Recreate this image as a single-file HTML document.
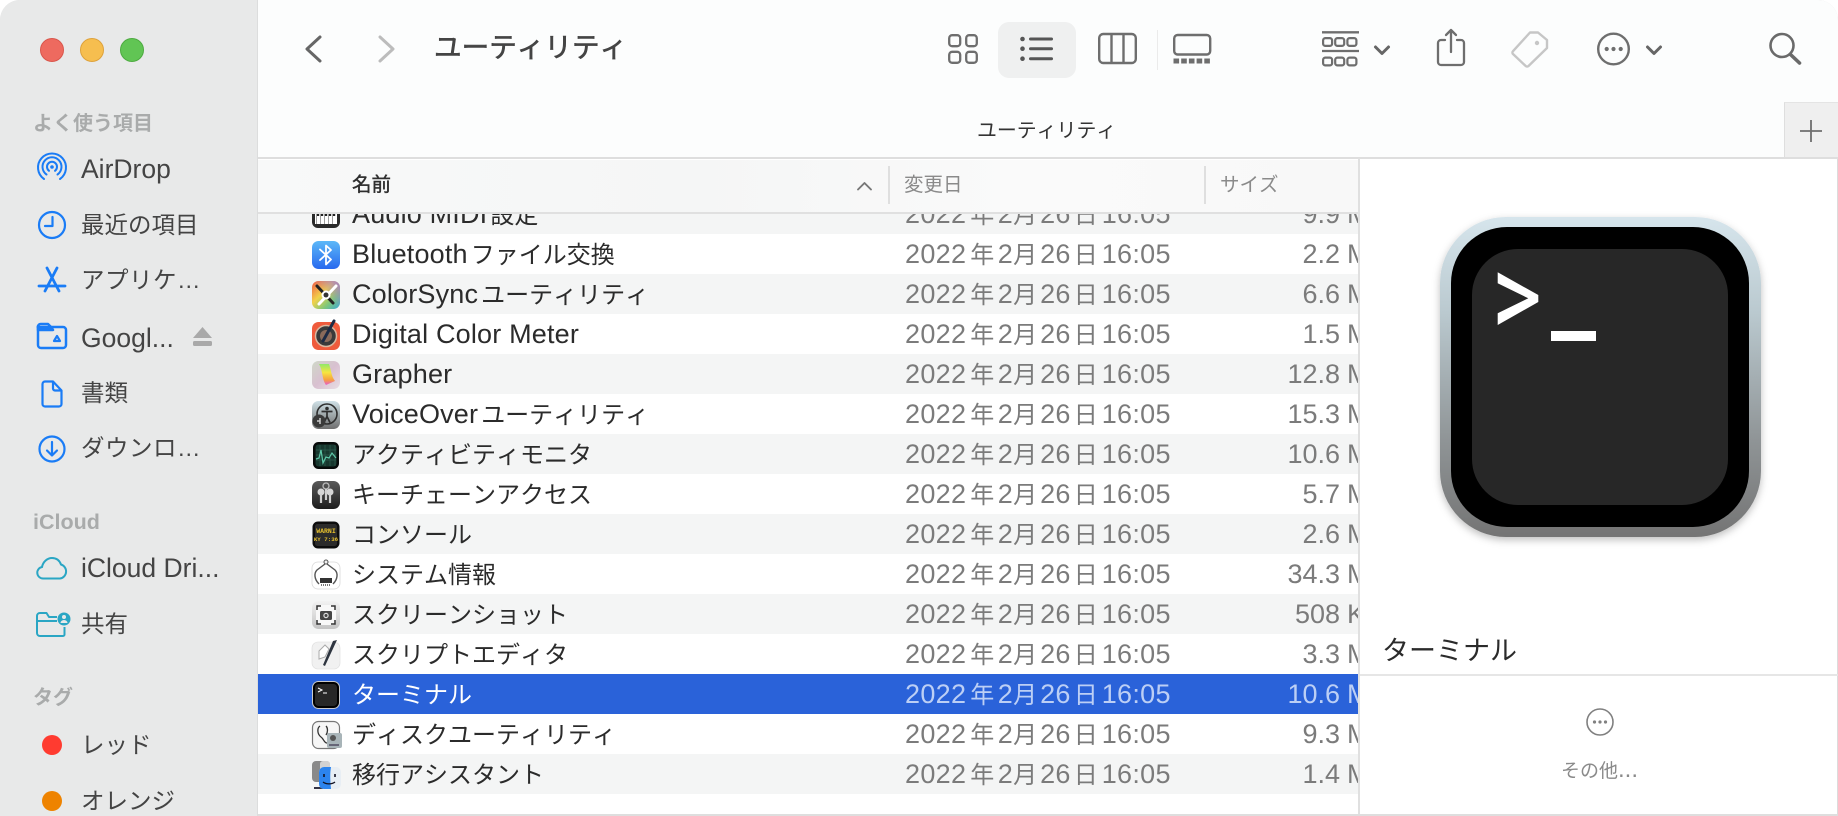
<!DOCTYPE html>
<html lang="ja"><head><meta charset="utf-8"><title>ユーティリティ</title>
<style>
*{box-sizing:border-box}
html,body{margin:0;padding:0;background:#fff}
body{width:1838px;height:816px;position:relative;overflow:hidden;font-family:"Liberation Sans","Noto Sans CJK JP",sans-serif;color:#2b2b2b}
.a{position:absolute}
svg{position:absolute;overflow:visible;display:block}
#win{position:absolute;inset:0;background:#fff;border-top-left-radius:20px;border-top-right-radius:20px;overflow:hidden;box-shadow:inset 0 0 0 1px #dcdcdc}
#side{position:absolute;left:0;top:0;width:258px;height:816px;background:#e8e9e9;border-right:1px solid #dcdddd}
#tb{position:absolute;left:258px;top:0;right:0;height:159px;background:#fcfdfd;border-bottom:2px solid #dedede}
.h{position:absolute;left:33px;font-size:20px;font-weight:700;color:#a9abab;line-height:24px;white-space:nowrap;font-kerning:none}
.s{position:absolute;left:81px;font-size:23.5px;color:#444;line-height:32px;white-space:nowrap;font-kerning:none}
.s.l{font-size:26.5px}
.s.e{letter-spacing:.5px}
.col{position:absolute;top:172px;line-height:26px;font-size:19.5px;color:#8a8a8a;white-space:nowrap;font-kerning:none}
#list{position:absolute;left:258px;top:213px;width:1100px;height:601px;overflow:hidden;background:#fff}
.r{position:absolute;left:0;width:1100px;height:40px;line-height:40px;font-size:27px;color:#2b2b2b;white-space:nowrap}
.r.z{background:#f4f5f5}
.r.sel{background:#2a62d9;color:#fff}
.r i{font-style:normal;font-size:24px;line-height:1;font-kerning:none;letter-spacing:0}
.n{position:absolute;left:94px;top:0;letter-spacing:.18px}
.g{margin-left:3px}
.d{position:absolute;left:647px;top:0;color:#7b7b7b;letter-spacing:.3px}
.d i:nth-of-type(1){margin:0 3.5px 0 4px}
.d i:nth-of-type(2){margin:0 3px 0 0}
.d i:nth-of-type(3){margin:0 4px 0 3px}
.z1{position:absolute;right:18px;top:0;color:#7b7b7b}
.u{position:absolute;left:1089px;top:0;color:#7b7b7b}
.sel .d,.sel .z1,.sel .u{color:#bccff5}
.ic{left:51px;top:4px;width:32px;height:32px}
</style></head><body>
<div id="win">
<div id="side"></div>
<div id="tb"></div>

<!-- traffic lights -->
<div class="a" style="left:40px;top:38px;width:24px;height:24px;border-radius:50%;background:#ee6a5f;border:1px solid #d9564c"></div>
<div class="a" style="left:80px;top:38px;width:24px;height:24px;border-radius:50%;background:#f6be4f;border:1px solid #dea23b"></div>
<div class="a" style="left:120px;top:38px;width:24px;height:24px;border-radius:50%;background:#61c554;border:1px solid #4dab40"></div>

<!-- sidebar -->
<div class="h" style="top:112px">よく使う項目</div>
<svg style="left:36px;top:152px" width="32" height="32" viewBox="0 0 32 32" fill="none" stroke="#1a7cf6" stroke-width="2" stroke-linecap="round"><path d="M8 27A14 14 0 1 1 24 27"/><path d="M10.500 22.500A9.500 9.500 0 1 1 21.500 22.500"/><path d="M13 18.800A5 5 0 1 1 19 18.800"/><circle cx="16" cy="15" r="1.800" fill="#1a7cf6" stroke="none"/></svg>
<div class="s l" style="top:153px">AirDrop</div>
<svg style="left:36px;top:209px" width="32" height="32" viewBox="0 0 32 32" fill="none" stroke="#1a7cf6" stroke-width="2.200" stroke-linecap="round" stroke-linejoin="round"><circle cx="16" cy="16" r="13"/><path d="M16.500 8v9H9"/></svg>
<div class="s" style="top:209px">最近の項目</div>
<svg style="left:36px;top:264px" width="32" height="32" viewBox="0 0 32 32" fill="none" stroke="#1a7cf6" stroke-width="2.800" stroke-linecap="round"><path d="M11 4l12 23"/><path d="M21 4L9 27"/><path d="M3 22h26"/></svg>
<div class="s e" style="top:264px">アプリケ…</div>
<svg style="left:36px;top:322px" width="32" height="28" viewBox="0 0 32 28" fill="none" stroke="#1a7cf6" stroke-width="2.500" stroke-linejoin="round"><path d="M2 6a3 3 0 0 1 3-4h7l3 3h12a3 3 0 0 1 3 3v15a3 3 0 0 1-3 3H5a3 3 0 0 1-3-3z"/><path d="M2 5h13l2 3H2z" fill="#1a7cf6"/><path d="M21 14l3 5h-6z" stroke-width="2.200"/></svg>
<div class="s l" style="top:322px">Googl...</div>
<svg style="left:193px;top:327px" width="19" height="19" viewBox="0 0 19 19" fill="#a9a9a9"><path d="M9.500 0L19 11H0z"/><rect y="14" width="19" height="5" rx="1.500"/></svg>
<svg style="left:41px;top:380px" width="22" height="28" viewBox="0 0 22 28" fill="none" stroke="#1a7cf6" stroke-width="2.200" stroke-linejoin="round"><path d="M4 1.500h8l8.500 9V24a2.500 2.500 0 0 1-2.500 2.500H4A2.500 2.500 0 0 1 1.500 24V4A2.500 2.500 0 0 1 4 1.500z"/><path d="M12 1.500v7a2 2 0 0 0 2 2h6.500"/></svg>
<div class="s" style="top:377px">書類</div>
<svg style="left:36px;top:433px" width="32" height="32" viewBox="0 0 32 32" fill="none" stroke="#1a7cf6" stroke-width="2.200" stroke-linecap="round" stroke-linejoin="round"><circle cx="16" cy="16" r="12.500"/><path d="M16 9v13M11 17.500l5 5 5-5"/></svg>
<div class="s e" style="top:432px">ダウンロ…</div>

<div class="h" style="top:510px;font-size:21.5px">iCloud</div>
<svg style="left:36px;top:556px" width="32" height="24" viewBox="0 0 32 24" fill="none" stroke="#2aa6c4" stroke-width="2"><path d="M7 22.500a5.800 5.800 0 0 1-1-11.500c1-5 5-9 10-9 4.500 0 7.500 2.500 9 6.500a7.200 7.200 0 0 1-1 14z"/></svg>
<div class="s l" style="top:552px">iCloud Dri...</div>
<svg style="left:36px;top:611px" width="34" height="26" viewBox="0 0 34 26" fill="none" stroke="#2aa6c4" stroke-width="2" stroke-linejoin="round"><path d="M21 6H13L10.500 2H4a3 3 0 0 0-3 3v17a3 3 0 0 0 3 3h23a1.500 1.500 0 0 0 1.500-1.500V16"/><path d="M1 10h20"/><circle cx="28" cy="8" r="6.500" fill="#2aa6c4" stroke="none"/><circle cx="28" cy="6" r="2" fill="#e8e9e9" stroke="none"/><path d="M24.500 12a3.500 3 0 0 1 7 0z" fill="#e8e9e9" stroke="none"/></svg>
<div class="s" style="top:608px">共有</div>

<div class="h" style="top:686px">タグ</div>
<div class="a" style="left:42px;top:735px;width:20px;height:20px;border-radius:50%;background:#ff3b30"></div>
<div class="s" style="top:729px">レッド</div>
<div class="a" style="left:42px;top:791px;width:20px;height:20px;border-radius:50%;background:#ee8300"></div>
<div class="s" style="top:785px">オレンジ</div>

<!-- toolbar -->
<svg style="left:305px;top:35px" width="17" height="28" viewBox="0 0 17 28" fill="none" stroke="#666" stroke-width="3" stroke-linecap="round" stroke-linejoin="round"><path d="M15 2L2 14l13 12"/></svg>
<svg style="left:378px;top:35px" width="17" height="28" viewBox="0 0 17 28" fill="none" stroke="#bcbcbc" stroke-width="3" stroke-linecap="round" stroke-linejoin="round"><path d="M2 2l13 12L2 26"/></svg>
<div class="a" style="left:434px;top:29px;font-size:27.6px;line-height:38px;color:#444;-webkit-text-stroke:.6px #444;white-space:nowrap;font-kerning:none">ユーティリティ</div>

<div class="a" style="left:998px;top:22px;width:78px;height:56px;border-radius:11px;background:#eff0f0"></div>
<svg style="left:947px;top:33px" width="32" height="31" viewBox="0 0 32 31" fill="none" stroke="#6e6e6e" stroke-width="2.300"><rect x="2.200" y="2.200" width="11" height="11" rx="3"/><rect x="19.200" y="2.200" width="10.600" height="11" rx="3"/><rect x="2.200" y="18.800" width="11" height="11" rx="3"/><rect x="19.200" y="18.800" width="10.600" height="11" rx="3"/></svg>
<svg style="left:1019px;top:35px" width="36" height="28" viewBox="0 0 36 28" fill="#555"><circle cx="3.500" cy="4" r="2.300"/><circle cx="3.500" cy="13.700" r="2.300"/><circle cx="3.500" cy="23.700" r="2.300"/><rect x="10" y="2.500" width="24" height="3" rx="1.500"/><rect x="10" y="12.200" width="24" height="3" rx="1.500"/><rect x="10" y="22.200" width="24" height="3" rx="1.500"/></svg>
<svg style="left:1098px;top:32px" width="39" height="33" viewBox="0 0 39 33" fill="none" stroke="#6e6e6e" stroke-width="2.400"><rect x="1.200" y="2" width="36.600" height="29" rx="4"/><path d="M13.500 2v29M25.500 2v29"/></svg>
<div class="a" style="left:1157px;top:30px;width:1px;height:40px;background:#ebebeb"></div>
<svg style="left:1172px;top:33px" width="40" height="31" viewBox="0 0 40 31" fill="none" stroke="#6e6e6e" stroke-width="2.400"><rect x="2.200" y="2" width="36" height="19.500" rx="3.500"/><path d="M1.500 28H38" stroke-width="5" stroke-dasharray="5.600 2.100"/></svg>

<svg style="left:1321px;top:30px" width="39" height="37" viewBox="0 0 39 37" fill="none" stroke="#6e6e6e" stroke-width="2.200"><path d="M1 2.300h37M1 21h37" stroke-width="2.300"/><rect x="2.100" y="8.100" width="9" height="7.800" rx="2.200"/><rect x="14.200" y="8.100" width="9" height="7.800" rx="2.200"/><rect x="26.400" y="8.100" width="9" height="7.800" rx="2.200"/><rect x="2.100" y="27.600" width="9" height="7.800" rx="2.200"/><rect x="14.200" y="27.600" width="9" height="7.800" rx="2.200"/><rect x="26.400" y="27.600" width="9" height="7.800" rx="2.200"/></svg>
<svg style="left:1373px;top:45px" width="18" height="11" viewBox="0 0 18 11" fill="none" stroke="#666" stroke-width="3" stroke-linecap="round" stroke-linejoin="round"><path d="M2.500 2l6.500 6.500 6.500-6.500"/></svg>
<svg style="left:1434px;top:28px" width="32" height="39" viewBox="0 0 32 39" fill="none" stroke="#6e6e6e" stroke-width="2.300" stroke-linecap="round" stroke-linejoin="round"><path d="M11 12H7a3 3 0 0 0-3 3v19a3 3 0 0 0 3 3h20a3 3 0 0 0 3-3V15a3 3 0 0 0-3-3h-4"/><path d="M17 24V2M12 7l5-5 5 5"/></svg>
<svg style="left:1509px;top:30px" width="41" height="39" viewBox="0 0 41 39" fill="none" stroke="#c6c6c6" stroke-width="2.400" stroke-linejoin="round"><path d="M21 2.500H29L38 10V18L19.500 36a2 2 0 0 1-2.800 0L4 24a2 2 0 0 1 0-2.800z"/><circle cx="28" cy="13" r="2.200" fill="#c6c6c6" stroke="none"/></svg>
<svg style="left:1596px;top:31px" width="36" height="36" viewBox="0 0 36 36"><circle cx="17.500" cy="18" r="15.300" fill="none" stroke="#6e6e6e" stroke-width="2.400"/><circle cx="10.700" cy="18" r="2.100" fill="#6e6e6e"/><circle cx="17.500" cy="18" r="2.100" fill="#6e6e6e"/><circle cx="24.700" cy="18" r="2.100" fill="#6e6e6e"/></svg>
<svg style="left:1645px;top:45px" width="18" height="11" viewBox="0 0 18 11" fill="none" stroke="#666" stroke-width="3" stroke-linecap="round" stroke-linejoin="round"><path d="M2.500 2l6.500 6.500 6.500-6.500"/></svg>
<svg style="left:1768px;top:31px" width="35" height="34" viewBox="0 0 35 34" fill="none" stroke="#6a6a6a" stroke-width="2.600" stroke-linecap="round"><circle cx="14" cy="14.500" r="11.500"/><path d="M22.500 23.500l9 8.500" stroke-width="3.600"/></svg>

<!-- tab bar -->
<div class="a" style="left:977px;top:118px;font-size:19.9px;line-height:26px;color:#333;white-space:nowrap;font-kerning:none">ユーティリティ</div>
<div class="a" style="left:1784px;top:102px;width:54px;height:57px;background:#efefef;border-left:1px solid #dedede;border-top:1px solid #e4e4e4;border-bottom:2px solid #dedede"></div>
<svg style="left:1800px;top:120px" width="22" height="22" viewBox="0 0 22 22" stroke="#6e6e6e" stroke-width="1.800"><path d="M11 0v22M0 11h22"/></svg>

<!-- list -->
<div id="list">
<div class="r z" style="top:-19px"><svg class="ic" viewBox="0 0 32 32"><rect x="3" y="3" width="28" height="27" rx="6" fill="#2a2a2a"/><rect x="6" y="7" width="22" height="19" fill="#fff"/><path d="M9 7v11M13 7v11M17 7v11M21 7v11M25 7v11" stroke="#222" stroke-width="2.400"/><path d="M7.500 7v19M11.500 7v19M15.500 7v19M19.500 7v19M23.500 7v19" stroke="#888" stroke-width=".8"/></svg><span class="n">Audio MIDI<i class="g">設定</i></span><span class="d">2022<i>年</i>2<i>月</i>26<i>日</i>16:05</span><span class="z1">9.9</span><span class="u">M</span></div>

<div class="r" style="top:21px"><svg class="ic" viewBox="0 0 32 32"><defs><linearGradient id="g1" x1="0" y1="0" x2="0" y2="1"><stop offset="0" stop-color="#5cb8f8"/><stop offset="1" stop-color="#2869ee"/></linearGradient></defs><rect x="3" y="3" width="28" height="28" rx="6.500" fill="url(#g1)"/><path d="M11 11.500l11 10-5 5V7.500l5 4.500-11 10" fill="none" stroke="#fff" stroke-width="1.800" stroke-linejoin="round" stroke-linecap="round"/></svg><span class="n">Bluetooth<i class="g">ファイル交換</i></span><span class="d">2022<i>年</i>2<i>月</i>26<i>日</i>16:05</span><span class="z1">2.2</span><span class="u">M</span></div>

<div class="r z" style="top:61px"><svg class="ic" viewBox="0 0 32 32"><defs><linearGradient id="g2" x1="0" y1="0" x2="1" y2="1"><stop offset="0" stop-color="#f05a48"/><stop offset=".4" stop-color="#f2d14a"/><stop offset=".7" stop-color="#7fc87a"/><stop offset="1" stop-color="#3aa7d8"/></linearGradient><linearGradient id="g2b" x1="1" y1="0" x2="0" y2="1"><stop offset="0" stop-color="#a67cc8"/><stop offset=".5" stop-color="#a67cc8" stop-opacity="0"/></linearGradient></defs><rect x="3" y="3" width="28" height="28" rx="6.500" fill="url(#g2)"/><rect x="3" y="3" width="28" height="28" rx="6.500" fill="url(#g2b)"/><path d="M8 8l16 17" stroke="#222" stroke-width="3" stroke-linecap="round"/><path d="M27 8l-17 18" stroke="#fff" stroke-width="3" stroke-linecap="round"/><circle cx="17" cy="17" r="4.500" fill="#fff"/><circle cx="17" cy="17" r="2.500" fill="#333"/></svg><span class="n">ColorSync<i class="g">ユーティリティ</i></span><span class="d">2022<i>年</i>2<i>月</i>26<i>日</i>16:05</span><span class="z1">6.6</span><span class="u">M</span></div>

<div class="r" style="top:101px"><svg class="ic" viewBox="0 0 32 32"><rect x="3" y="4" width="28" height="28" rx="6.500" fill="#ef5b3c"/><circle cx="17" cy="18" r="10.500" fill="#3a3a3a" stroke="#d8b8a0" stroke-width="1.500"/><circle cx="17" cy="18" r="6" fill="#8a6a5a"/><path d="M14 23L25 3" stroke="#1c2a44" stroke-width="3" stroke-linecap="round"/></svg><span class="n">Digital Color Meter</span><span class="d">2022<i>年</i>2<i>月</i>26<i>日</i>16:05</span><span class="z1">1.5</span><span class="u">M</span></div>

<div class="r z" style="top:141px"><svg class="ic" viewBox="0 0 32 32"><defs><linearGradient id="g3" x1="0" y1="0" x2="1" y2="1"><stop offset="0" stop-color="#cfd8c8"/><stop offset=".5" stop-color="#d8c0d0"/><stop offset="1" stop-color="#e8dde4"/></linearGradient><linearGradient id="g3b" x1="0" y1="0" x2="0" y2="1"><stop offset="0" stop-color="#8fe86a"/><stop offset=".4" stop-color="#f6e640"/><stop offset=".75" stop-color="#f6a040"/><stop offset="1" stop-color="#e85ad0"/></linearGradient></defs><rect x="3" y="3" width="28" height="28" rx="6.500" fill="url(#g3)"/><path d="M10 6h10c2 5 2 12 6 17l-9 4c-4-5-3-14-7-21z" fill="url(#g3b)"/></svg><span class="n">Grapher</span><span class="d">2022<i>年</i>2<i>月</i>26<i>日</i>16:05</span><span class="z1">12.8</span><span class="u">M</span></div>

<div class="r" style="top:181px"><svg class="ic" viewBox="0 0 32 32"><defs><linearGradient id="g4" x1="0" y1="0" x2="0" y2="1"><stop offset="0" stop-color="#cfe0e6"/><stop offset="1" stop-color="#6f6f6f"/></linearGradient></defs><rect x="3" y="3" width="28" height="28" rx="6.500" fill="url(#g4)"/><circle cx="18" cy="16" r="10" fill="none" stroke="#2e2e2e" stroke-width="1.600"/><circle cx="18" cy="10.500" r="1.800" fill="#2e2e2e"/><path d="M12.500 13.500h11M18 13.500v5l-3 6M18 18.500l3 6" fill="none" stroke="#2e2e2e" stroke-width="1.700"/><circle cx="10" cy="23" r="6.500" fill="#3a3a3a"/><path d="M8 23h3M11 20v6" stroke="#ccc" stroke-width="1.500"/></svg><span class="n">VoiceOver<i class="g">ユーティリティ</i></span><span class="d">2022<i>年</i>2<i>月</i>26<i>日</i>16:05</span><span class="z1">15.3</span><span class="u">M</span></div>

<div class="r z" style="top:221px"><svg class="ic" viewBox="0 0 32 32"><rect x="4" y="4" width="26" height="27" rx="5.500" fill="#070b0a"/><rect x="6.500" y="6.500" width="21" height="22" rx="3" fill="#17382f"/><path d="M7 12h20M7 17h20M7 22h20M11 7v21M16 7v21M21 7v21M26 7v21" stroke="#2f5e50" stroke-width=".7"/><path d="M7 21l3-1 2-8 2 13 3-6 3 1 3-5 4 5" fill="none" stroke="#5ec8a8" stroke-width="1.200"/></svg><span class="n"><i>アクティビティモニタ</i></span><span class="d">2022<i>年</i>2<i>月</i>26<i>日</i>16:05</span><span class="z1">10.6</span><span class="u">M</span></div>

<div class="r" style="top:261px"><svg class="ic" viewBox="0 0 32 32"><defs><linearGradient id="g5" x1="0" y1="0" x2="0" y2="1"><stop offset="0" stop-color="#5a5a5a"/><stop offset="1" stop-color="#1d1d1d"/></linearGradient></defs><rect x="3" y="3" width="28" height="28" rx="6.500" fill="url(#g5)"/><circle cx="17" cy="8" r="3" fill="none" stroke="#bbb" stroke-width="1.300"/><circle cx="12" cy="14" r="3.500" fill="#d6d6d6"/><circle cx="21" cy="14" r="3.500" fill="#d6d6d6"/><path d="M12 16v9M21 16v9M17 11v11" stroke="#cfcfcf" stroke-width="2.200"/></svg><span class="n"><i>キーチェーンアクセス</i></span><span class="d">2022<i>年</i>2<i>月</i>26<i>日</i>16:05</span><span class="z1">5.7</span><span class="u">M</span></div>

<div class="r z" style="top:301px"><svg class="ic" viewBox="0 0 32 32"><rect x="3.500" y="3.500" width="27" height="27" rx="5.500" fill="#0d0d0d"/><rect x="6" y="6" width="22" height="22" rx="2.500" fill="#2b2b2b"/><text x="17" y="15" text-anchor="middle" font-family="Liberation Mono,monospace" font-size="6.500" font-weight="700" fill="#e6c02e">WARNI</text><text x="17" y="23" text-anchor="middle" font-family="Liberation Mono,monospace" font-size="5.800" font-weight="700" fill="#e6c02e">KY 7:36</text></svg><span class="n"><i>コンソール</i></span><span class="d">2022<i>年</i>2<i>月</i>26<i>日</i>16:05</span><span class="z1">2.6</span><span class="u">M</span></div>

<div class="r" style="top:341px"><svg class="ic" viewBox="0 0 32 32"><rect x="3" y="4" width="28" height="27" rx="6" fill="#fff" stroke="#d8d8d8" stroke-width=".8"/><circle cx="17" cy="4" r="2" fill="none" stroke="#555" stroke-width="1"/><path d="M16 6L8 12c-3 3-3 9 2 14M18 6l8 6c3 3 3 9-2 14" fill="none" stroke="#555" stroke-width="1.400"/><rect x="11" y="20" width="12" height="5" fill="#333"/><path d="M12 27h10" stroke="#777" stroke-width="2" stroke-dasharray="1 1"/></svg><span class="n"><i>システム情報</i></span><span class="d">2022<i>年</i>2<i>月</i>26<i>日</i>16:05</span><span class="z1">34.3</span><span class="u">M</span></div>

<div class="r z" style="top:381px"><svg class="ic" viewBox="0 0 32 32"><defs><linearGradient id="g6" x1="0" y1="0" x2="0" y2="1"><stop offset="0" stop-color="#f2f2f2"/><stop offset="1" stop-color="#c4c4c4"/></linearGradient></defs><rect x="3" y="3" width="28" height="28" rx="6.500" fill="url(#g6)"/><rect x="7" y="7" width="20" height="20" rx="3" fill="#f8f8f8"/><path d="M8 12V8h4M22 8h4v4M26 22v4h-4M12 26H8v-4" fill="none" stroke="#333" stroke-width="1.500"/><rect x="11" y="13" width="12" height="9" rx="1.500" fill="#444"/><circle cx="17" cy="17.500" r="2.700" fill="#ddd"/><circle cx="17" cy="17.500" r="1.500" fill="#444"/></svg><span class="n"><i>スクリーンショット</i></span><span class="d">2022<i>年</i>2<i>月</i>26<i>日</i>16:05</span><span class="z1">508</span><span class="u">K</span></div>

<div class="r" style="top:421px"><svg class="ic" viewBox="0 0 32 32"><rect x="3" y="4" width="28" height="27" rx="6" fill="#f1f1f1" stroke="#ddd" stroke-width=".6"/><path d="M10 13l6-6 4 4-4 8-6 2z" fill="#fff" stroke="#aaa" stroke-width="1"/><path d="M28 2L16 28l-2-1L24 3z" fill="#2e3540"/></svg><span class="n"><i>スクリプトエディタ</i></span><span class="d">2022<i>年</i>2<i>月</i>26<i>日</i>16:05</span><span class="z1">3.3</span><span class="u">M</span></div>

<div class="r sel" style="top:461px"><svg class="ic" viewBox="0 0 32 32"><rect x="3" y="3" width="28" height="28" rx="6.500" fill="#c9c9c9"/><rect x="4" y="4" width="26" height="26" rx="5.500" fill="#000"/><rect x="6" y="6" width="22" height="22" rx="3.500" fill="#272727"/><path d="M9 10l4 2-4 2" fill="none" stroke="#fff" stroke-width="1"/><path d="M14 15h4" stroke="#fff" stroke-width="1"/></svg><span class="n"><i>ターミナル</i></span><span class="d">2022<i>年</i>2<i>月</i>26<i>日</i>16:05</span><span class="z1">10.6</span><span class="u">M</span></div>

<div class="r" style="top:501px"><svg class="ic" viewBox="0 0 32 32"><rect x="3.500" y="3.500" width="27" height="27" rx="6" fill="#f6f6f6" stroke="#777" stroke-width="1.200"/><path d="M11 8c-3 2-3 8 1 11 3 2 3 6 6 6M17 8c2 2 2 6 0 9" fill="none" stroke="#333" stroke-width="1.300"/><rect x="18" y="15" width="15" height="15" rx="2" fill="#a8b4b8"/><circle cx="24" cy="20" r="3" fill="#555"/><path d="M20 27h10" stroke="#667" stroke-width="2"/></svg><span class="n"><i>ディスクユーティリティ</i></span><span class="d">2022<i>年</i>2<i>月</i>26<i>日</i>16:05</span><span class="z1">9.3</span><span class="u">M</span></div>

<div class="r z" style="top:541px"><svg class="ic" viewBox="0 0 32 32"><rect x="3" y="3" width="18" height="21" rx="4" fill="#8a8a8a"/><rect x="11" y="3" width="10" height="21" rx="3" fill="#d2d2d2"/><path d="M5 30h20" stroke="#334" stroke-width="2"/><rect x="10" y="9" width="22" height="22" rx="5" fill="#e8eef4"/><path d="M10 14a5 5 0 0 1 5-5h7c-1 6-1 12 0 22h-7a5 5 0 0 1-5-5z" fill="#2c84ee"/><path d="M15 16v3M26 16v3" stroke="#112" stroke-width="1.600"/><path d="M14 24c3 2.500 9 2.500 12 0" fill="none" stroke="#112" stroke-width="1.200"/></svg><span class="n"><i>移行アシスタント</i></span><span class="d">2022<i>年</i>2<i>月</i>26<i>日</i>16:05</span><span class="z1">1.4</span><span class="u">M</span></div>
</div>

<!-- column header -->
<div class="a" style="left:258px;top:160px;width:1100px;height:54px;background:linear-gradient(90deg,#f8f9f9,#f5f6f6 40%,#fafafa 70%,#f8f8f8);border-bottom:2px solid #e0e0e0"></div>
<div class="col" style="left:352px;color:#2f2f2f;-webkit-text-stroke:.4px #2f2f2f">名前</div>
<svg style="left:856px;top:181px" width="17" height="10" viewBox="0 0 17 10" fill="none" stroke="#777" stroke-width="1.900" stroke-linecap="round" stroke-linejoin="round"><path d="M2 8.500l6.500-6.500 6.500 6.500"/></svg>
<div class="a" style="left:888px;top:166px;width:2px;height:38px;background:#dfdfdf"></div>
<div class="col" style="left:904px">変更日</div>
<div class="a" style="left:1204px;top:166px;width:2px;height:38px;background:#dfdfdf"></div>
<div class="col" style="left:1220px">サイズ</div>

<!-- dividers -->
<div class="a" style="left:1358px;top:158px;width:2px;height:656px;background:#e0e0e0"></div>
<div class="a" style="left:258px;top:814px;width:1580px;height:2px;background:#dedede"></div>

<!-- preview -->
<svg style="left:1430px;top:207px" width="342" height="346" viewBox="0 0 342 346">
<defs>
<linearGradient id="tg" x1="0" y1="0" x2="0" y2="1"><stop offset="0" stop-color="#d6e5ec"/><stop offset=".3" stop-color="#bac9cf"/><stop offset=".7" stop-color="#8f9496"/><stop offset="1" stop-color="#747474"/></linearGradient>
<filter id="sh" x="-10%" y="-10%" width="120%" height="120%"><feDropShadow dx="0" dy="3" stdDeviation="4" flood-color="#000" flood-opacity=".25"/></filter>
</defs>
<rect x="10" y="10" width="321" height="320" rx="66" fill="url(#tg)" filter="url(#sh)"/>
<rect x="21" y="20" width="298" height="300" rx="56" fill="#000"/>
<rect x="42" y="42" width="256" height="256" rx="46" fill="#272727"/>
<path d="M67.700 65.300L108.300 88V95L67.700 118V106.300L98.300 91.300 67.700 76.300Z" fill="#fff"/>
<rect x="121" y="124" width="45" height="10" fill="#fff"/>
</svg>
<div class="a" style="left:1382px;top:632px;font-size:27px;line-height:38px;color:#2b2b2b;white-space:nowrap;font-kerning:none">ターミナル</div>
<div class="a" style="left:1360px;top:674px;width:478px;height:2px;background:#e6e6e6"></div>
<svg style="left:1586px;top:708px" width="28" height="28" viewBox="0 0 28 28"><circle cx="14" cy="14" r="13" fill="none" stroke="#808080" stroke-width="1.600"/><circle cx="8.500" cy="14" r="1.600" fill="#808080"/><circle cx="14" cy="14" r="1.600" fill="#808080"/><circle cx="19.500" cy="14" r="1.600" fill="#808080"/></svg>
<div class="a" style="left:1561px;top:758px;font-size:19px;line-height:26px;color:#8a8a8a;white-space:nowrap">その他<span style="font-size:24px;line-height:1">...</span></div>
</div>
</body></html>
